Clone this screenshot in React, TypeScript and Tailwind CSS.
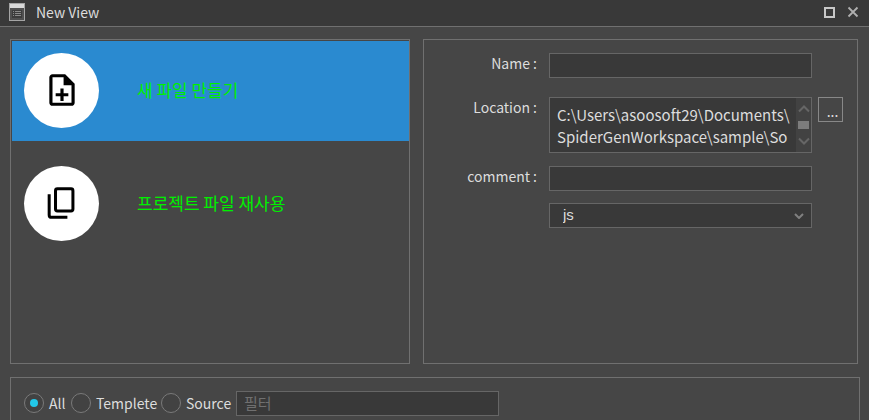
import React, { useState } from "react";

const field =
  "h-[25px] w-[263px] shrink-0 rounded-none border border-[#666666] bg-[#393939] px-[7px] pb-[2px] text-[15px] text-[#dddddd] outline-none";
const fieldLabel =
  "w-[113px] shrink-0 text-right text-sm leading-5 font-normal text-[#dddddd]";

const PATH = "C:\\Users\\asoosoft29\\Documents\\\nSpiderGenWorkspace\\sample\\So";

function WindowIcon() {
  return (
    <svg width="16" height="18" viewBox="0 0 16 18" aria-hidden="true">
      <rect x="0.5" y="0.5" width="15" height="17" fill="#505050" stroke="#a5a5a5" />
      <rect x="1" y="1" width="14" height="4" fill="#d8d8d8" />
      <rect x="3" y="7" width="10" height="8" fill="#3c3c3c" />
      <path d="M4 8.500h1M4 10.500h1M4 12.500h1M6 8.500h6M6 10.500h6M6 12.500h6" stroke="#8a8a8a" />
    </svg>
  );
}

function NewFileIcon() {
  return (
    <svg width="38" height="38" viewBox="0 0 24 24" fill="#000000" aria-hidden="true">
      <path d="M13 11h-2v3H8v2h3v3h2v-3h3v-2h-3v-3zm1-9H6c-1.100 0-2 .9-2 2v16c0 1.100.89 2 1.990 2H18c1.100 0 2-.9 2-2V8l-6-6zm4 18H6V4h7v5h5v11z" />
    </svg>
  );
}

function CopyIcon() {
  return (
    <svg width="38" height="38" viewBox="0.6 0 24 24" fill="none" stroke="#000000" strokeWidth="1.900" aria-hidden="true">
      <rect x="8.500" y="3" width="11" height="14" rx="1.200" />
      <path d="M4.500 6.500V19.500Q4.500 21 6 21H16" />
    </svg>
  );
}

function Choice({
  label,
  selected,
  onSelect,
  children,
}: {
  label: string;
  selected: boolean;
  onSelect: () => void;
  children: React.ReactNode;
}) {
  return (
    <button
      type="button"
      aria-pressed={selected}
      onClick={onSelect}
      className={`flex h-[100px] w-full items-center gap-[38px] px-3 pb-[2px] text-left text-[17px] leading-6 text-[#00f000] ${
        selected ? "bg-[#2a8ad0]" : ""
      }`}
    >
      <span className="flex size-[75px] shrink-0 items-center justify-center rounded-full bg-white">
        {children}
      </span>
      <span>{label}</span>
    </button>
  );
}

function Radio({ label, className, defaultChecked }: { label: string; className: string; defaultChecked?: boolean }) {
  return (
    <label className={`flex items-center gap-[5px] text-sm font-normal text-[#dddddd] ${className}`}>
      <input
        type="radio"
        name="scope"
        defaultChecked={defaultChecked}
        className="m-0 grid size-5 shrink-0 appearance-none place-items-center rounded-full border border-[#7a7a7a] bg-[#424242] before:size-2 before:rounded-full before:bg-transparent checked:before:bg-[#22c8e8]"
      />
      <span className="whitespace-nowrap">{label}</span>
    </label>
  );
}

export default function App() {
  const [mode, setMode] = useState("new");
  return (
    <div className="h-screen overflow-hidden bg-[#464646] font-['Noto_Sans_CJK_KR',sans-serif] text-[#dddddd]">
      <header className="flex h-[27px] items-center border-b border-[#707070] bg-[#393939] pr-[10px] pb-[2px] pl-[9px]">
        <WindowIcon />
        <h1 className="ml-[11px] text-sm leading-5 font-normal text-[#dddddd]">New View</h1>
        <div className="ml-auto flex items-center gap-3">
          <button type="button" aria-label="Maximize" className="size-[11px] border-2 border-[#c8c8c8]" />
          <button type="button" aria-label="Close">
            <svg width="12" height="12" viewBox="0 0 12 12" stroke="#b0b0b0" strokeWidth="1.800" aria-hidden="true">
              <path d="M1.500 1.500l9 9M10.500 1.500l-9 9" />
            </svg>
          </button>
        </div>
      </header>

      <main className="pt-3 pr-[9px] pl-[10px]">
        <div className="flex h-[325px] gap-[13px] pr-[2px]">
          <section className="flex w-[400px] shrink-0 flex-col gap-[13px] border border-[#707070] pt-px pl-px">
            <Choice label="새 파일 만들기" selected={mode === "new"} onSelect={() => setMode("new")}>
              <NewFileIcon />
            </Choice>
            <Choice label="프로젝트 파일 재사용" selected={mode === "reuse"} onSelect={() => setMode("reuse")}>
              <CopyIcon />
            </Choice>
          </section>

          <form className="flex min-w-0 flex-1 flex-col border border-[#707070] pt-[13px]">
            <div className="flex gap-3">
              <label htmlFor="name" className={fieldLabel}>Name :</label>
              <input id="name" type="text" className={field} />
            </div>
            <div className="mt-[19px] flex gap-3">
              <label htmlFor="location" className={fieldLabel}>Location :</label>
              <div className="flex gap-[6px]">
                <div className="flex h-14 w-[263px] shrink-0 border border-[#666666] bg-[#393939]">
                  <textarea
                    id="location"
                    readOnly
                    value={PATH}
                    className="min-w-0 flex-1 resize-none overflow-hidden bg-transparent pt-[6px] pl-[7px] text-[15px] leading-[22px] whitespace-pre text-[#dddddd] outline-none"
                  />
                  <div className="flex w-[15px] flex-col items-center justify-between bg-[#424242] py-[7px]">
                    <svg width="12" height="8" viewBox="0 0 12 8" fill="none" stroke="#666666" strokeWidth="2" aria-hidden="true">
                      <path d="M1 6.500l5-5 5 5" />
                    </svg>
                    <span className="h-2 w-[11px] bg-[#7c7c7c]" />
                    <svg width="12" height="8" viewBox="0 0 12 8" fill="none" stroke="#666666" strokeWidth="2" aria-hidden="true">
                      <path d="M1 1.500l5 5 5-5" />
                    </svg>
                  </div>
                </div>
                <button
                  type="button"
                  aria-label="Browse"
                  className="flex size-[25px] items-center justify-center border border-[#888888] pt-[2px] pl-1 text-sm leading-5 text-[#dddddd]"
                >
                  ...
                </button>
              </div>
            </div>
            <div className="mt-[13px] flex gap-3">
              <label htmlFor="comment" className={fieldLabel}>comment :</label>
              <input id="comment" type="text" className={field} />
            </div>
            <div className="mt-3 ml-[125px] grid w-[263px] items-center">
              <select
                aria-label="File type"
                className="col-start-1 row-start-1 h-[25px] w-full appearance-none rounded-none border border-[#666666] bg-[#393939] px-[13px] font-['Liberation_Sans',sans-serif] text-[15px] text-[#dddddd] outline-none"
              >
                <option>js</option>
              </select>
              <svg
                className="pointer-events-none col-start-1 row-start-1 mr-2 justify-self-end"
                width="10" height="6" viewBox="0 0 10 6" fill="none" stroke="#808080" strokeWidth="2" aria-hidden="true"
              >
                <path d="M1 1l4 4 4-4" />
              </svg>
            </div>
          </form>
        </div>

        <section className="mt-[13px] flex h-20 items-start border border-[#707070] px-[13px] pt-[13px]">
          <div className="flex h-[25px] items-center pb-px">
            <Radio label="All" defaultChecked className="w-[47px]" />
            <Radio label="Templete" className="w-[90px]" />
            <Radio label="Source" className="w-[75px]" />
          </div>
          <input
            type="text"
            aria-label="필터"
            placeholder="필터"
            className={`${field} placeholder:text-[#707070]`}
          />
        </section>
      </main>
    </div>
  );
}
